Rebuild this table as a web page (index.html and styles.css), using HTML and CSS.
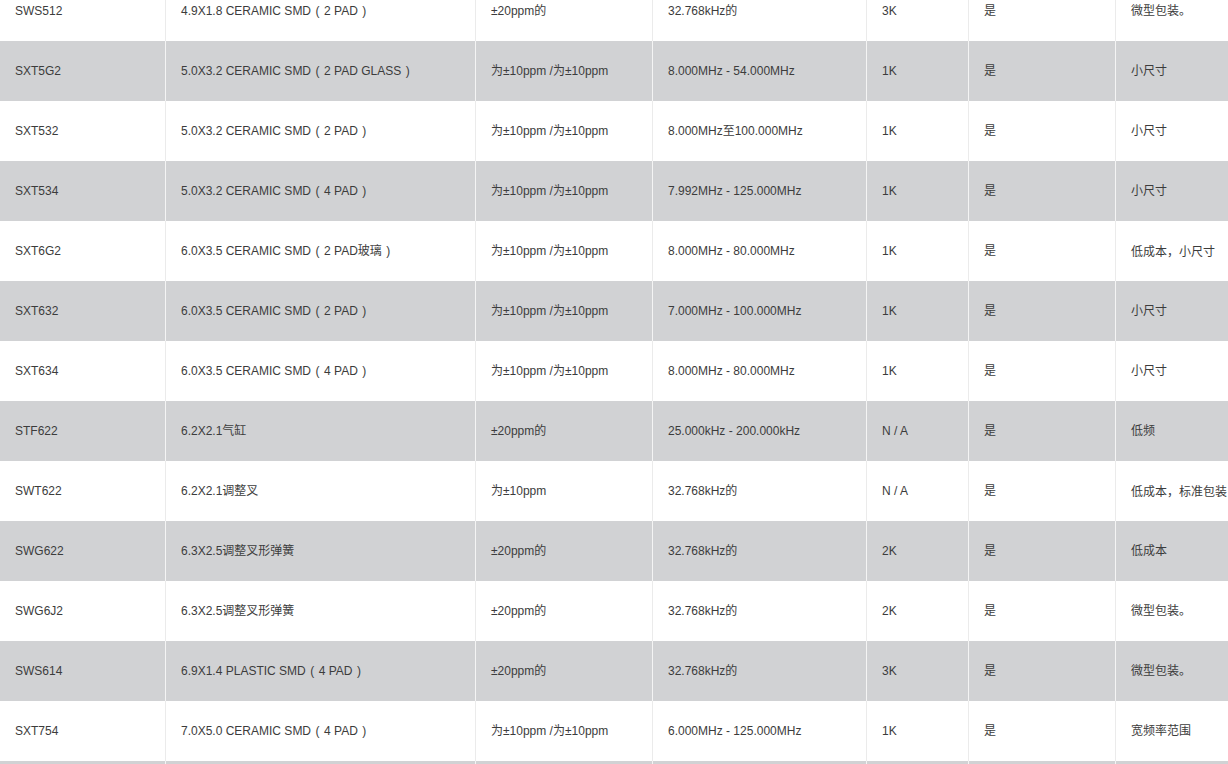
FILE: index.html
```
<!DOCTYPE html>
<html lang="zh-CN">
<head>
<meta charset="utf-8">
<title>Products</title>
<link rel="stylesheet" href="styles.css">
</head>
<body>
<div class="wrap">
<table class="spec">
<colgroup>
<col class="c1"><col class="c2"><col class="c3"><col class="c4"><col class="c5"><col class="c6"><col class="c7">
</colgroup>
<tbody>
<tr><td>SWS512</td><td>4.9X1.8 CERAMIC SMD<span class="pr">(</span>2 PAD<span class="pr">)</span></td><td>±20ppm的</td><td>32.768kHz的</td><td>3K</td><td>是</td><td>微型包装。</td></tr>
<tr><td>SXT5G2</td><td>5.0X3.2 CERAMIC SMD<span class="pr">(</span>2 PAD GLASS<span class="pr">)</span></td><td>为±10ppm /为±10ppm</td><td>8.000MHz - 54.000MHz</td><td>1K</td><td>是</td><td>小尺寸</td></tr>
<tr><td>SXT532</td><td>5.0X3.2 CERAMIC SMD<span class="pr">(</span>2 PAD<span class="pr">)</span></td><td>为±10ppm /为±10ppm</td><td>8.000MHz至100.000MHz</td><td>1K</td><td>是</td><td>小尺寸</td></tr>
<tr><td>SXT534</td><td>5.0X3.2 CERAMIC SMD<span class="pr">(</span>4 PAD<span class="pr">)</span></td><td>为±10ppm /为±10ppm</td><td>7.992MHz - 125.000MHz</td><td>1K</td><td>是</td><td>小尺寸</td></tr>
<tr><td>SXT6G2</td><td>6.0X3.5 CERAMIC SMD<span class="pr">(</span>2 PAD玻璃<span class="pr">)</span></td><td>为±10ppm /为±10ppm</td><td>8.000MHz - 80.000MHz</td><td>1K</td><td>是</td><td>低成本<span class="cm">，</span>小尺寸</td></tr>
<tr><td>SXT632</td><td>6.0X3.5 CERAMIC SMD<span class="pr">(</span>2 PAD<span class="pr">)</span></td><td>为±10ppm /为±10ppm</td><td>7.000MHz - 100.000MHz</td><td>1K</td><td>是</td><td>小尺寸</td></tr>
<tr><td>SXT634</td><td>6.0X3.5 CERAMIC SMD<span class="pr">(</span>4 PAD<span class="pr">)</span></td><td>为±10ppm /为±10ppm</td><td>8.000MHz - 80.000MHz</td><td>1K</td><td>是</td><td>小尺寸</td></tr>
<tr><td>STF622</td><td>6.2X2.1气缸</td><td>±20ppm的</td><td>25.000kHz - 200.000kHz</td><td>N / A</td><td>是</td><td>低频</td></tr>
<tr><td>SWT622</td><td>6.2X2.1调整叉</td><td>为±10ppm</td><td>32.768kHz的</td><td>N / A</td><td>是</td><td>低成本<span class="cm">，</span>标准包装</td></tr>
<tr><td>SWG622</td><td>6.3X2.5调整叉形弹簧</td><td>±20ppm的</td><td>32.768kHz的</td><td>2K</td><td>是</td><td>低成本</td></tr>
<tr><td>SWG6J2</td><td>6.3X2.5调整叉形弹簧</td><td>±20ppm的</td><td>32.768kHz的</td><td>2K</td><td>是</td><td>微型包装。</td></tr>
<tr><td>SWS614</td><td>6.9X1.4 PLASTIC SMD<span class="pr">(</span>4 PAD<span class="pr">)</span></td><td>±20ppm的</td><td>32.768kHz的</td><td>3K</td><td>是</td><td>微型包装。</td></tr>
<tr><td>SXT754</td><td>7.0X5.0 CERAMIC SMD<span class="pr">(</span>4 PAD<span class="pr">)</span></td><td>为±10ppm /为±10ppm</td><td>6.000MHz - 125.000MHz</td><td>1K</td><td>是</td><td>宽频率范围</td></tr>
<tr class="tail"><td></td><td></td><td></td><td></td><td></td><td></td><td></td></tr>
</tbody>
</table>
</div>
</body>
</html>
```
FILE: styles.css
```
html, body {
  margin: 0;
  padding: 0;
  background: #fff;
  overflow: hidden;
}
.wrap {
  margin-top: -19px;
}
.spec {
  width: 1228px;
  table-layout: fixed;
  border-collapse: separate;
  border-spacing: 0;
  font-family: "Liberation Sans", Arial, "Noto Sans CJK SC", sans-serif;
  font-size: 12px;
  line-height: 18px;
  color: #3c3c3c;
}
.c1 { width: 166px; }
.c2 { width: 310px; }
.c3 { width: 177px; }
.c4 { width: 214px; }
.c5 { width: 102px; }
.c6 { width: 147px; }
.c7 { width: 112px; }
.spec td {
  height: 60px;
  padding: 0 0 0 15px;
  box-sizing: border-box;
  vertical-align: middle;
  white-space: nowrap;
  overflow: hidden;
  border-right: 1px solid #ebebeb;
}
.spec td:last-child {
  border-right: none;
}
.spec tr:nth-child(even) td {
  background: #d1d2d4;
  border-right-color: #f4f4f4;
}
.spec tr:nth-child(even) td:last-child {
  border-right: none;
}
.pr {
  display: inline-block;
  width: 13px;
  text-align: center;
}
.cm {
  font-family: "Noto Sans CJK TC", sans-serif;
}
```
